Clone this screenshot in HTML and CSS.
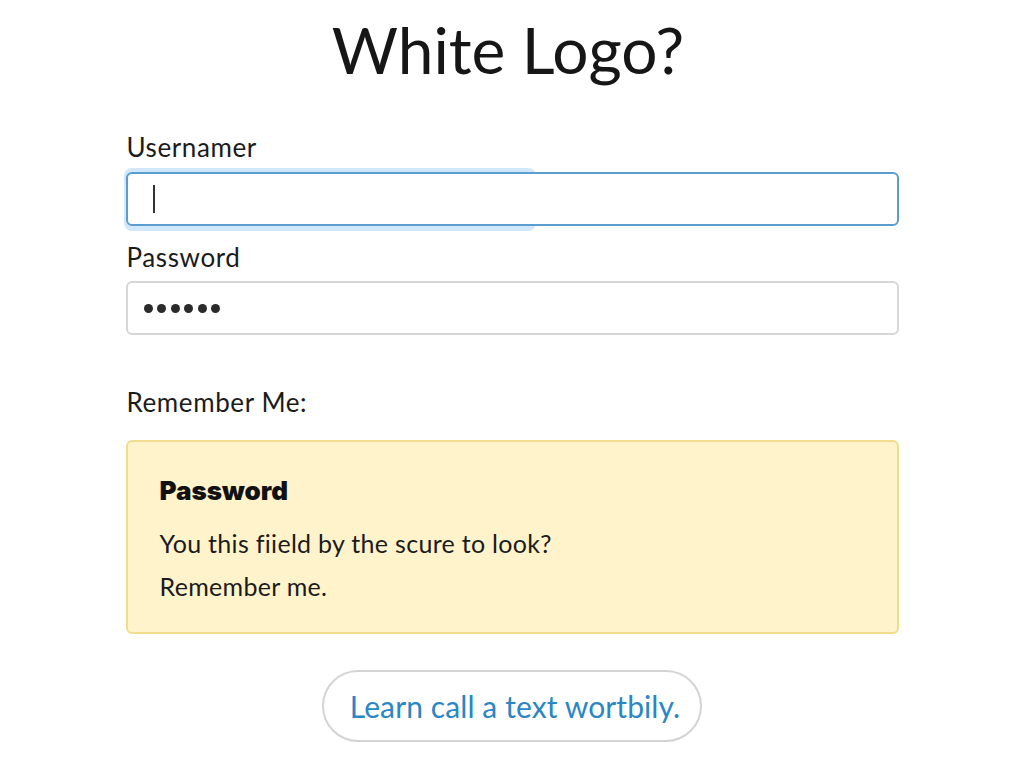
FILE: index.html
```html
<!DOCTYPE html>
<html>
<head>
<meta charset="utf-8">
<link rel="stylesheet" href="styles.css">
</head>
<body>
<main class="page">
  <h1 class="title">White Logo?</h1>
  <form class="form">
    <label class="label">Usernamer</label>
    <div class="input input-focus"><span class="caret"></span></div>
    <label class="label label-pw">Password</label>
    <div class="input"><span class="dots"><i></i><i></i><i></i><i></i><i></i><i></i></span></div>
    <div class="remember">Remember Me:</div>
    <div class="notice">
      <div class="notice-title">Password</div>
      <p class="notice-text">You this fiield by the scure to look?</p>
      <p class="notice-text">Remember me.</p>
    </div>
    <div class="actions">
      <button type="button" class="pill">Learn call a text wortbily.</button>
    </div>
  </form>
</main>
</body>
</html>
```
FILE: styles.css
```css
* { box-sizing: border-box; }
html { background: #fff; }
body {
  margin: 0;
  padding: 0;
  font-family: "Lato", "Liberation Sans", sans-serif;
  color: #1b1b1b;
}
.page {
  width: 773px;
  margin: 0 auto;
  padding-top: 10px;
}
.title {
  margin: 0 0 0 -8px;
  text-align: center;
  font-weight: 400;
  font-size: 64px;
  line-height: 80px;
  letter-spacing: 0;
  color: #161616;
}
.form {
  display: flex;
  flex-direction: column;
  margin-top: 42px;
  position: relative;
  z-index: 0;
}
.label {
  font-size: 26px;
  line-height: 30px;
  letter-spacing: 0.6px;
  margin-left: 1px;
  margin-bottom: 10px;
}
.label-pw { margin-top: 16px; margin-bottom: 9px; }
.input {
  height: 54px;
  border: 2px solid #d6d6d6;
  border-radius: 6px;
  background: #fff;
  display: flex;
  align-items: center;
  padding-left: 25px;
  position: relative;
}
.input-focus {
  border-color: #5b9dcf;
}
.input-focus::before {
  content: "";
  position: absolute;
  left: -4px;
  top: -6px;
  width: 412px;
  height: 63px;
  border-radius: 8px;
  background: rgba(150, 205, 245, 0.45);
  z-index: -1;
}
.caret {
  width: 2.5px;
  height: 28px;
  background: #333;
}
.dots { display: flex; gap: 4.5px; margin-left: -9px; }
.dots i {
  display: block;
  width: 9px;
  height: 9px;
  border-radius: 50%;
  background: #2b2b2b;
}
.remember {
  font-size: 26px;
  line-height: 30px;
  letter-spacing: 0.6px;
  margin-top: 52px;
  margin-left: 1px;
}
.notice {
  margin-top: 23px;
  height: 194px;
  background: #fff3cb;
  border: 2px solid #f1dc8f;
  border-radius: 6px;
  padding: 34px 32px 0 32px;
}
.notice-title {
  font-family: "Inter", "Lato", sans-serif;
  font-weight: 900;
  font-size: 26px;
  line-height: 30px;
  color: #111;
}
.notice-text {
  margin: 0;
  font-size: 25px;
  line-height: 30px;
  letter-spacing: 0.3px;
}
.notice-title + .notice-text { margin-top: 22px; }
.notice-text + .notice-text { margin-top: 13px; }
.actions { display: flex; justify-content: center; margin-top: 36px; }
.pill {
  width: 380px;
  height: 72px;
  border: 2px solid #d4d4d4;
  border-radius: 36px;
  background: #fff;
  font-family: "Lato", "Liberation Sans", sans-serif;
  font-size: 30px;
  letter-spacing: 0.1px;
  color: #2a86c4;
  padding: 0 0 0 6px;
  cursor: pointer;
}
```
